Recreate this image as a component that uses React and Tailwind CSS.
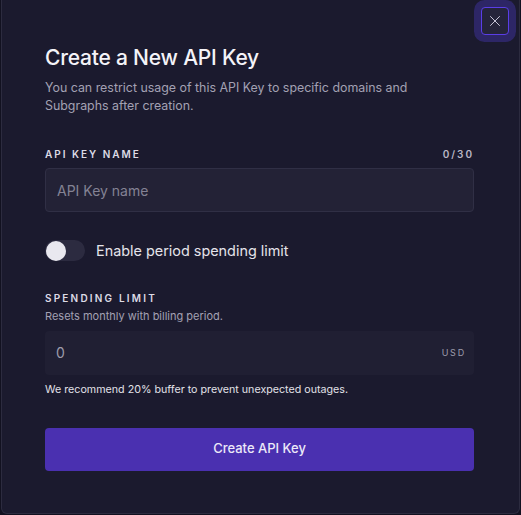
import { X } from "lucide-react"

export default function App() {
  return (
    <div className="w-[521px] h-[515px] bg-[#121120] overflow-hidden" style={{ fontFamily: "Inter, 'Noto Sans', sans-serif" }}>
      <div className="relative mx-px h-[514px] bg-[#1b1a2e] border-x border-b border-[#2c2b3f] rounded-b-md pl-[43px] pr-[45px] pt-[44px]">
        <button className="absolute right-[10px] top-[7px] w-[28px] h-[28px] flex items-center justify-center rounded-[4px] border border-[#5a3ee6] bg-[#25243a] ring-[7px] ring-[#2d2666] text-[#d8d6e6]">
          <X size={18} strokeWidth={1.2} />
        </button>

        <h1 className="text-[21px] leading-[28px] font-medium text-[#f4f3f8] tracking-[-0.01em]">Create a New API Key</h1>
        <p className="mt-[7px] text-[12.4px] leading-[18px] text-[#a3a1b3]">
          You can restrict usage of this API Key to specific domains and<br />Subgraphs after creation.
        </p>

        <div className="mt-[33px] flex justify-between items-center text-[10px] leading-[12px] font-semibold tracking-[0.2em] text-[#dddbe6]">
          <span>API KEY NAME</span>
          <span className="text-[#b9b7c6]">0/30</span>
        </div>
        <div className="mt-[8px] h-[44px] rounded-[4px] border border-[#302f45] bg-[#232236] flex items-center px-[11px] text-[14px] text-[#848294]">
          API Key name
        </div>

        <div className="mt-[28px] flex items-center gap-[11px]">
          <div className="w-[40px] h-[21px] rounded-full bg-[#2c2b40] p-px flex items-center">
            <div className="w-[20px] h-[20px] rounded-full bg-[#e9e8ef]" />
          </div>
          <span className="text-[14.4px] text-[#e4e3ea]">Enable period spending limit</span>
        </div>

        <div className="mt-[30px] text-[10px] leading-[12px] font-semibold tracking-[0.22em] text-[#dddbe6]">SPENDING LIMIT</div>
        <div className="mt-[5px] text-[11px] leading-[14px] text-[#a3a1b3]">Resets monthly with billing period.</div>
        <div className="mt-[8px] h-[44px] rounded-[4px] bg-[#201f33] flex items-center justify-between pl-[11px] pr-[8px]">
          <span className="text-[14px] text-[#9d9bab]">0</span>
          <span className="text-[9px] tracking-[0.2em] text-[#9d9bab]">USD</span>
        </div>
        <div className="mt-[8px] text-[10.7px] leading-[14px] text-[#e2e1e8]">We recommend 20% buffer to prevent unexpected outages.</div>

        <button className="mt-[31px] w-full h-[43px] rounded-[4px] bg-[#4a30b0] text-[13px] font-medium text-[#ece9f8]">
          Create API Key
        </button>
      </div>
    </div>
  )
}
